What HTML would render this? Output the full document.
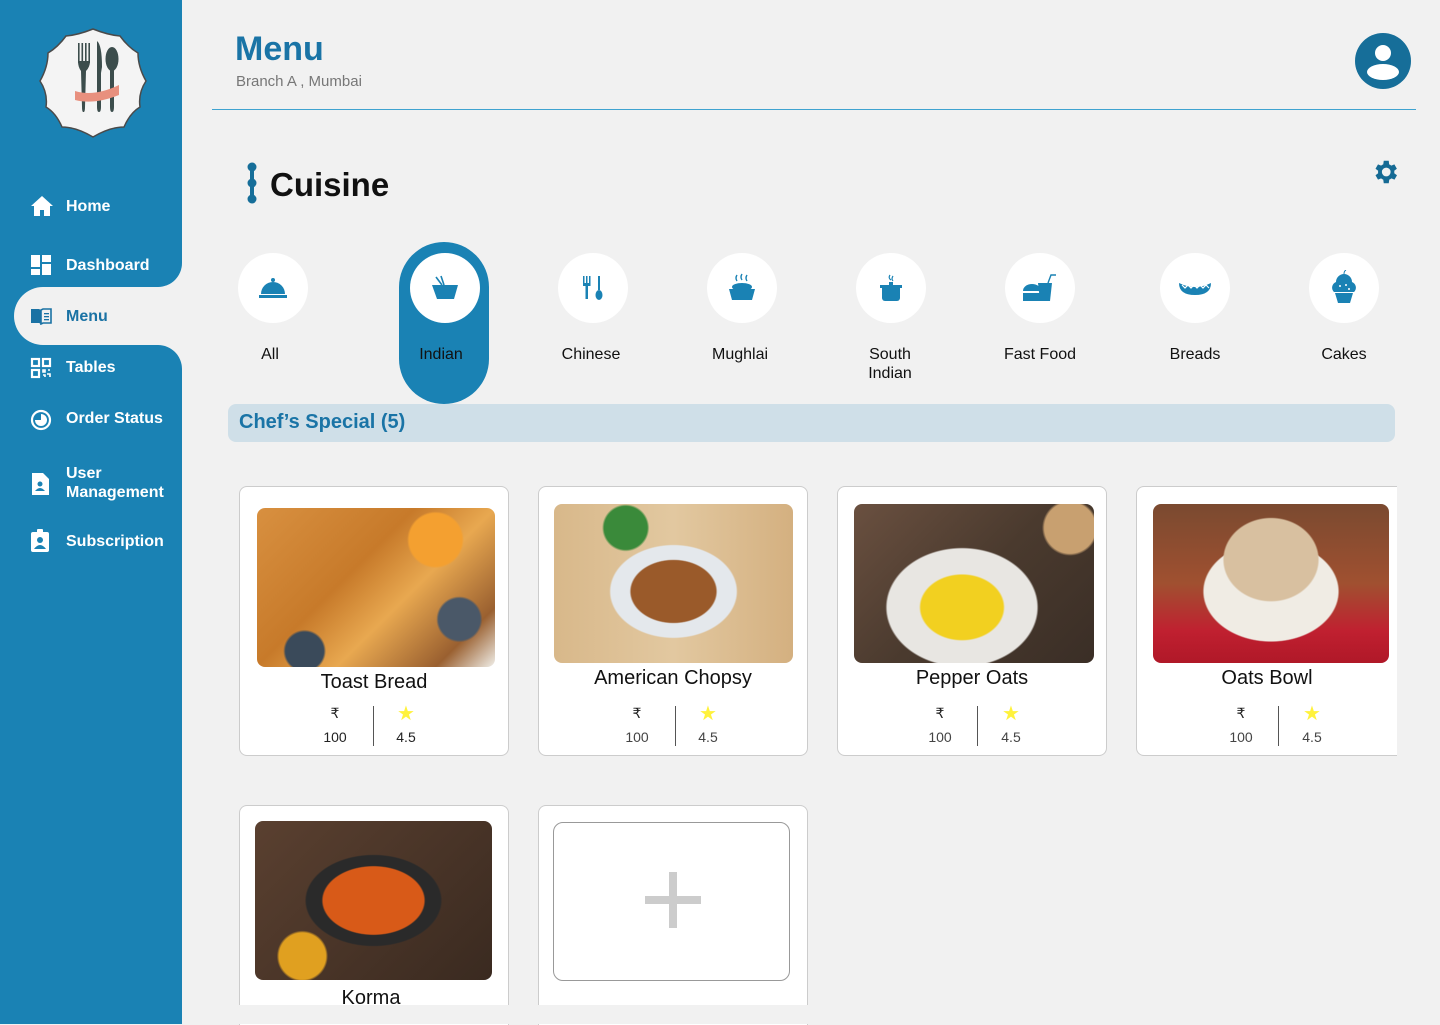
<!DOCTYPE html>
<html><head><meta charset="utf-8">
<style>
*{box-sizing:border-box;margin:0;padding:0}
body{width:1440px;height:1024px;overflow:hidden;background:#f1f1f1;font-family:"Liberation Sans",sans-serif;position:relative}
.sb{position:absolute;left:0;top:0;width:182px;height:1024px;background:#1a82b4}
.notch{position:absolute;left:130px;top:260px;width:52px;height:110px;background:#f1f1f1}
.b1{position:absolute;left:0;top:0;width:182px;height:287px;background:#1a82b4;border-bottom-right-radius:24px}
.b2{position:absolute;left:0;top:345px;width:182px;height:679px;background:#1a82b4;border-top-right-radius:24px}
.pill{position:absolute;left:14px;top:287px;width:168px;height:58px;background:#f1f1f1;border-radius:29px 0 0 29px}
.nav{position:absolute;left:66px;color:#fff;font-weight:bold;font-size:16px;line-height:19px}
.ni{position:absolute;left:30px}
.abs{position:absolute}
.circ{position:absolute;width:70px;height:70px;border-radius:50%;background:#fff;display:flex;align-items:center;justify-content:center}
.lbl{position:absolute;width:120px;text-align:center;font-size:16px;color:#111;line-height:19px}
.card{position:absolute;width:270px;height:270px;background:#fff;border:1px solid #ccc;border-radius:8px;overflow:hidden}
.img{position:absolute;border-radius:8px}
.name{position:absolute;left:0;width:100%;text-align:center;font-size:20px;color:#111}
.pr{position:absolute;font-size:14px;color:#222;text-align:center;width:40px}
.div{position:absolute;width:1px;height:40px;background:#555}
.star{position:absolute;color:#fff23c;font-size:20px}
</style></head><body>
<div class="sb"></div>
<div class="notch"></div>
<div class="b1"></div>
<div class="b2"></div>
<div class="pill"></div>
<!-- logo -->
<svg class="abs" style="left:38px;top:27px" width="110" height="112" viewBox="0 0 110 112">
<path d="M55 2 Q70 8 82 9 Q90 20 100 26 Q100 40 108 54 Q100 66 102 80 Q92 86 86 100 Q72 100 55 110 Q38 100 24 100 Q18 86 8 80 Q10 66 2 54 Q10 40 10 26 Q20 20 28 9 Q40 8 55 2Z" fill="#f4f4f4" stroke="#4a4a4a" stroke-width="1.5"/>
<g fill="#3c4d4c"><rect x="40" y="16" width="1.6" height="20"/><rect x="43.5" y="16" width="1.6" height="20"/><rect x="47" y="16" width="1.6" height="20"/><rect x="50.4" y="16" width="1.6" height="20"/><path d="M40 34h12q0 6-4 10l-1 36q0 4-1 5h-1q-1-1-1-5l-1-36q-3-4-3-10z"/><path d="M59 14q5 4 5 26l-1 6 0 34q0 5-2 5t-2-5z"/><ellipse cx="74" cy="32" rx="6.5" ry="12"/><path d="M72 42h4l0 38q0 5-2 5t-2-5z"/></g>
<path d="M37 64 Q56 70 81 58 L81 68 Q56 78 37 73 Z" fill="#e8907e"/>
</svg>
<!-- nav icons -->
<svg class="ni" style="top:195px" width="24" height="22" viewBox="0 0 24 22"><path d="M12 1L1 11h3v10h6v-6h4v6h6V11h3z" fill="#fff"/></svg>
<div class="nav" style="top:197px">Home</div>
<svg class="ni" style="top:254px" width="22" height="22" viewBox="0 0 22 22" fill="#fff"><rect x="1" y="1" width="9" height="12"/><rect x="12" y="1" width="9" height="7"/><rect x="1" y="15" width="9" height="6"/><rect x="12" y="10" width="9" height="11"/></svg>
<div class="nav" style="top:256px">Dashboard</div>
<svg class="ni" style="top:307px" width="22" height="18" viewBox="0 0 22 18" fill="#1a72a4"><path d="M1 2h8l2 1v14l-2-1H1z"/><path d="M21 2h-8l-2 1v14l2-1h8z" fill="none" stroke="#1a72a4" stroke-width="1.6"/><rect x="14" y="6" width="5" height="1.3"/><rect x="14" y="9" width="5" height="1.3"/><rect x="14" y="12" width="5" height="1.3"/></svg>
<div class="nav" style="top:307px;color:#1a72a4">Menu</div>
<svg class="ni" style="top:357px" width="22" height="22" viewBox="0 0 22 22" fill="none" stroke="#fff" stroke-width="2.2"><rect x="2" y="2" width="7" height="7"/><rect x="13" y="2" width="7" height="7"/><rect x="2" y="13" width="7" height="7"/><path d="M13 13h2v2h-2zM18 13h2M13 18h2v2M17 17h3v3" stroke-width="1.6"/></svg>
<div class="nav" style="top:358px">Tables</div>
<svg class="ni" style="top:409px" width="22" height="22" viewBox="0 0 22 22"><circle cx="11" cy="11" r="9" fill="none" stroke="#fff" stroke-width="2.2"/><path d="M11 5a6 6 0 1 1-6 6l6 0z" fill="#fff"/></svg>
<div class="nav" style="top:409px">Order Status</div>
<svg class="ni" style="top:472px" width="20" height="24" viewBox="0 0 20 24"><path d="M2 1h11l6 6v16H2z" fill="#fff"/><circle cx="10" cy="12" r="2.5" fill="#1a82b4"/><path d="M5 19q5-6 10 0z" fill="#1a82b4"/></svg>
<div class="nav" style="top:464px">User<br>Management</div>
<svg class="ni" style="top:529px" width="20" height="24" viewBox="0 0 20 24"><rect x="1" y="3" width="18" height="20" rx="2" fill="#fff"/><rect x="7" y="0" width="6" height="5" rx="1" fill="#fff"/><circle cx="10" cy="11" r="3" fill="#1a82b4"/><path d="M4 20q6-8 12 0z" fill="#1a82b4"/></svg>
<div class="nav" style="top:532px">Subscription</div>

<!-- header -->
<div class="abs" style="left:235px;top:30px;font-size:34px;font-weight:bold;color:#1a74a6">Menu</div>
<div class="abs" style="left:236px;top:73px;font-size:15px;color:#777">Branch A , Mumbai</div>
<div class="abs" style="left:212px;top:109px;width:1204px;height:1px;background:#3fa3d0"></div>
<svg class="abs" style="left:1355px;top:33px" width="56" height="56" viewBox="0 0 56 56"><circle cx="28" cy="28" r="28" fill="#166e99"/><circle cx="28" cy="20" r="8" fill="#fff"/><ellipse cx="28" cy="39" rx="16" ry="8" fill="#fff"/></svg>
<svg class="abs" style="left:1370px;top:156px" width="30" height="32" viewBox="0 0 24 24"><path fill="#156a94" d="M19.4 13a7.5 7.5 0 0 0 0-2l2.1-1.6-2-3.5-2.5 1a7 7 0 0 0-1.7-1L15 3h-4l-.4 2.9a7 7 0 0 0-1.7 1l-2.5-1-2 3.5L6.5 11a7.5 7.5 0 0 0 0 2l-2.1 1.6 2 3.5 2.5-1a7 7 0 0 0 1.7 1L11 21h4l.4-2.9a7 7 0 0 0 1.7-1l2.5 1 2-3.5zM13 15.5a3.5 3.5 0 1 1 0-7 3.5 3.5 0 0 1 0 7z"/></svg>

<svg class="abs" style="left:245px;top:162px" width="14" height="42" viewBox="0 0 14 42"><g fill="#166e99"><circle cx="7" cy="5" r="4.5"/><circle cx="7" cy="21" r="4.5"/><circle cx="7" cy="37" r="4.5"/><rect x="5" y="5" width="4" height="32"/></g></svg>
<div class="abs" style="left:270px;top:166px;font-size:33px;font-weight:bold;color:#111">Cuisine</div>

<!-- cuisine -->
<div class="abs" style="left:399px;top:242px;width:90px;height:162px;border-radius:45px;background:#1a82b4"></div>
<div class="circ" style="left:238px;top:253px"><svg width="30" height="24" viewBox="0 0 30 24" fill="#1a82b4"><circle cx="15" cy="4" r="2"/><path d="M3 18a12 12 0 0 1 24 0z"/><rect x="1" y="19" width="28" height="3"/></svg></div>
<div class="circ" style="left:410px;top:253px"><svg width="30" height="26" viewBox="0 0 30 26" fill="#1a82b4"><path d="M2 10h26l-4 14H7z"/><path d="M6 2l6 8M11 1l3 9" stroke="#1a82b4" stroke-width="1.6"/></svg></div>
<div class="circ" style="left:558px;top:253px"><svg width="24" height="26" viewBox="0 0 24 26" fill="#1a82b4"><rect x="2" y="1" width="1.5" height="8"/><rect x="5" y="1" width="1.5" height="8"/><rect x="8" y="1" width="1.5" height="8"/><rect x="2" y="8" width="7.5" height="3"/><rect x="4.5" y="10" width="2.5" height="14"/><rect x="17" y="1" width="2" height="14"/><ellipse cx="18" cy="20" rx="3.5" ry="5"/></svg></div>
<div class="circ" style="left:707px;top:253px"><svg width="30" height="30" viewBox="0 0 30 30" fill="#1a82b4"><path d="M10 2q-2 3 0 6M15 1q-2 3 0 6M20 2q-2 3 0 6" stroke="#1a82b4" fill="none" stroke-width="1.4"/><ellipse cx="15" cy="14" rx="10" ry="4"/><path d="M2 16h26l-3 11H5z"/></svg></div>
<div class="circ" style="left:856px;top:253px"><svg width="28" height="30" viewBox="0 0 28 30" fill="#1a82b4"><path d="M13 2q-2 3 1 5M16 3q-2 3 0 5" stroke="#1a82b4" fill="none" stroke-width="1.2"/><rect x="12" y="9" width="4" height="3"/><rect x="3" y="12" width="22" height="3"/><path d="M5 15h18v10a3 3 0 0 1-3 3H8a3 3 0 0 1-3-3z"/></svg></div>
<div class="circ" style="left:1005px;top:253px"><svg width="36" height="30" viewBox="0 0 36 30" fill="#1a82b4"><path d="M1 18a9 7 0 0 1 18 0z"/><rect x="1" y="20" width="18" height="8"/><path d="M16 10h14l-2 18H18z"/><path d="M26 10l3-8h5" stroke="#1a82b4" fill="none" stroke-width="1.4"/></svg></div>
<div class="circ" style="left:1160px;top:253px"><svg width="36" height="18" viewBox="0 0 36 18" fill="#1a82b4"><path d="M2 4q16 8 32 0q0 12-16 12T2 4z"/><path d="M5 6l3 3 3-3 3 3 3-3 3 3 3-3 3 3 3-3 3 3" stroke="#fff" fill="none" stroke-width="1.2"/></svg></div>
<div class="circ" style="left:1309px;top:253px"><svg width="28" height="36" viewBox="0 0 28 36" fill="#1a82b4"><circle cx="14" cy="8" r="3.5"/><path d="M14 4q0-3 2-4" stroke="#1a82b4" fill="none"/><path d="M4 22a6 6 0 0 1 2-10a8 8 0 0 1 16 0a6 6 0 0 1 2 10z"/><circle cx="10" cy="16" r="1" fill="#fff"/><circle cx="16" cy="15" r="1" fill="#fff"/><circle cx="19" cy="19" r="1" fill="#fff"/><path d="M5 23h18l-3 10H8z"/></svg></div>
<div class="lbl" style="left:210px;top:345px">All</div>
<div class="lbl" style="left:381px;top:345px">Indian</div>
<div class="lbl" style="left:531px;top:345px">Chinese</div>
<div class="lbl" style="left:680px;top:345px">Mughlai</div>
<div class="lbl" style="left:830px;top:345px">South<br>Indian</div>
<div class="lbl" style="left:980px;top:345px">Fast Food</div>
<div class="lbl" style="left:1135px;top:345px">Breads</div>
<div class="lbl" style="left:1284px;top:345px">Cakes</div>

<div class="abs" style="left:228px;top:404px;width:1167px;height:38px;background:#cfdfe8;border-radius:8px"></div>
<div class="abs" style="left:239px;top:411px;font-size:20px;font-weight:bold;color:#1a74a6">Chef’s Special (5)</div>

<!-- cards -->
<div class="card" style="left:239px;top:486px">
 <div class="img" style="left:17px;top:21px;width:238px;height:159px;background:radial-gradient(circle at 75% 20%,#f4a030 0 12%,transparent 13%),radial-gradient(circle at 20% 90%,#3a4a5a 0 8%,transparent 9%),radial-gradient(circle at 85% 70%,#4a5868 0 9%,transparent 10%),linear-gradient(135deg,#d89040,#c77a2a 40%,#e8a850 60%,#9a6030 85%,#f0eee8)"></div>
 <div class="name" style="top:184px">Toast Bread</div>
 <div class="pr" style="left:75px;top:218px">₹</div><div class="pr" style="left:75px;top:242px">100</div>
 <div class="div" style="left:133px;top:219px"></div>
 <div class="star" style="left:157px;top:214px">★</div><div class="pr" style="left:146px;top:242px">4.5</div>
</div>
<div class="card" style="left:538px;top:486px">
 <div class="img" style="left:15px;top:17px;width:239px;height:159px;background:radial-gradient(circle at 30% 15%,#3a8a3a 0 10%,transparent 11%),radial-gradient(ellipse at 50% 55%,#9a5a2a 0 25%,#e4e8ec 26% 37%,transparent 38%),linear-gradient(90deg,#d8b88a,#e2c8a0,#d4b080)"></div>
 <div class="name" style="top:180px">American Chopsy</div>
 <div class="pr" style="left:78px;top:218px">₹</div><div class="pr" style="left:78px;top:242px;color:#444">100</div>
 <div class="div" style="left:136px;top:219px"></div>
 <div class="star" style="left:160px;top:214px">★</div><div class="pr" style="left:149px;top:242px;color:#444">4.5</div>
</div>
<div class="card" style="left:837px;top:486px">
 <div class="img" style="left:16px;top:17px;width:240px;height:159px;background:radial-gradient(ellipse at 45% 65%,#f2d020 0 22%,#e8e6e2 23% 40%,transparent 41%),radial-gradient(circle at 90% 15%,#c8a070 0 10%,transparent 11%),linear-gradient(135deg,#6a5040,#4a3a2e 50%,#3a2e26)"></div>
 <div class="name" style="top:180px">Pepper Oats</div>
 <div class="pr" style="left:82px;top:218px">₹</div><div class="pr" style="left:82px;top:242px;color:#444">100</div>
 <div class="div" style="left:139px;top:219px"></div>
 <div class="star" style="left:164px;top:214px">★</div><div class="pr" style="left:153px;top:242px;color:#444">4.5</div>
</div>
<div class="card" style="left:1136px;top:486px;width:261px;border-right:none;border-radius:8px 0 0 8px">
 <div class="img" style="left:16px;top:17px;width:236px;height:159px;background:radial-gradient(ellipse at 50% 35%,#d8c0a0 0 28%,transparent 29%),radial-gradient(ellipse at 50% 55%,#f0ece4 0 40%,transparent 41%),linear-gradient(180deg,#7a4a30,#a05030 50%,#c02030 80%,#b01828)"></div>
 <div class="name" style="top:180px">Oats Bowl</div>
 <div class="pr" style="left:84px;top:218px">₹</div><div class="pr" style="left:84px;top:242px;color:#444">100</div>
 <div class="div" style="left:141px;top:219px"></div>
 <div class="star" style="left:166px;top:214px">★</div><div class="pr" style="left:155px;top:242px;color:#444">4.5</div>
</div>
<div class="card" style="left:239px;top:805px;height:220px;border-bottom:none;border-radius:8px 8px 0 0">
 <div class="img" style="left:15px;top:15px;width:237px;height:159px;background:radial-gradient(ellipse at 50% 50%,#d85a18 0 30%,#2a2a2a 31% 40%,transparent 41%),radial-gradient(circle at 20% 85%,#e0a020 0 10%,transparent 11%),linear-gradient(135deg,#5a4030,#3a2a20)"></div>
 <div class="name" style="top:181px;left:-3px">Korma</div>
</div>
<div class="card" style="left:538px;top:805px;height:220px;border-bottom:none;border-radius:8px 8px 0 0">
 <div class="abs" style="left:14px;top:16px;width:237px;height:159px;border:1px solid #999;border-radius:10px"></div>
 <div class="abs" style="left:130px;top:66px;width:8px;height:56px;background:#ccc"></div>
 <div class="abs" style="left:106px;top:90px;width:56px;height:8px;background:#ccc"></div>
</div>
<div class="abs" style="left:182px;top:1005px;width:1258px;height:19px;background:#f1f1f1"></div>
</body></html>
